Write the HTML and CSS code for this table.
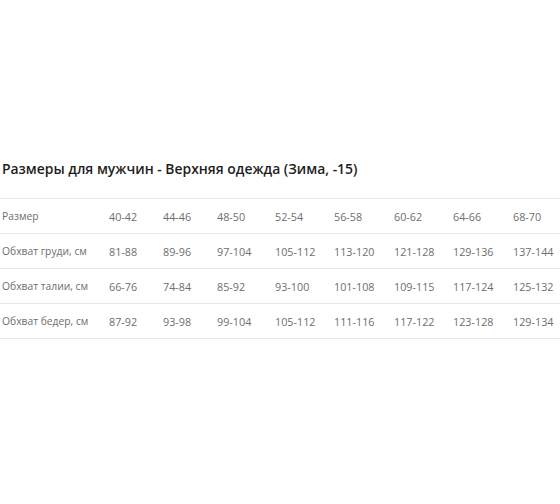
FILE: index.html
```html
<!DOCTYPE html>
<html lang="ru">
<head>
<meta charset="utf-8">
<link rel="stylesheet" href="styles.css">
</head>
<body>
<div class="page">
  <h2 class="title">Размеры для мужчин - Верхняя одежда (Зима, -15)</h2>
  <table class="sizes">
    <colgroup>
      <col class="c-label"><col class="c54"><col class="c54"><col class="c58"><col class="c59"><col class="c60"><col class="c59"><col class="c60"><col>
    </colgroup>
    <tbody>
      <tr><td>Размер</td><td>40-42</td><td>44-46</td><td>48-50</td><td>52-54</td><td>56-58</td><td>60-62</td><td>64-66</td><td>68-70</td></tr>
      <tr><td>Обхват груди, см</td><td>81-88</td><td>89-96</td><td>97-104</td><td>105-112</td><td>113-120</td><td>121-128</td><td>129-136</td><td>137-144</td></tr>
      <tr><td>Обхват талии, см</td><td>66-76</td><td>74-84</td><td>85-92</td><td>93-100</td><td>101-108</td><td>109-115</td><td>117-124</td><td>125-132</td></tr>
      <tr><td>Обхват бедер, см</td><td>87-92</td><td>93-98</td><td>99-104</td><td>105-112</td><td>111-116</td><td>117-122</td><td>123-128</td><td>129-134</td></tr>
    </tbody>
  </table>
</div>
</body>
</html>
```
FILE: styles.css
```css
html, body {
  margin: 0;
  padding: 0;
  background: #ffffff;
}
.page {
  width: 560px;
  height: 504px;
  padding-top: 158px;
  box-sizing: border-box;
  font-family: "Open Sans", "Noto Sans", sans-serif;
}
.title {
  margin: 0 0 18px 2px;
  font-size: 13.9px;
  line-height: 22px;
  font-weight: 600;
  color: #1e1e1e;
  white-space: nowrap;
}
.sizes {
  width: 560px;
  table-layout: fixed;
  border-collapse: collapse;
}
.c-label { width: 109px; }
.c54 { width: 54px; }
.c58 { width: 58px; }
.c59 { width: 59px; }
.c60 { width: 60px; }
.sizes td {
  height: 34px;
  padding: 0;
  border-top: 1px solid #e8e8e8;
  border-bottom: 1px solid #e8e8e8;
  font-size: 10.8px;
  color: #6e6e6e;
  vertical-align: middle;
  white-space: nowrap;
}
.sizes td:first-child {
  padding-left: 2px;
  font-size: 10.3px;
}
```
